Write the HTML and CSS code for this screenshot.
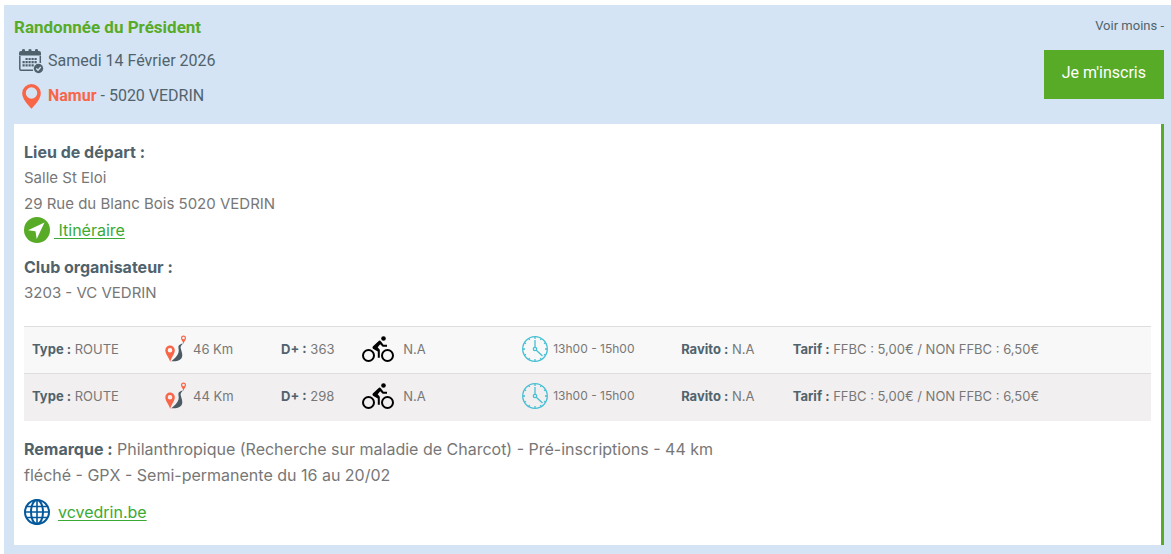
FILE: index.html
```html
<!DOCTYPE html>
<html lang="fr">
<head>
<meta charset="UTF-8">
<meta name="viewport" content="width=device-width, initial-scale=1.0">
<title>Randonnée du Président</title>
<link rel="stylesheet" href="styles.css">
</head>
<body>
<!-- icônes réutilisées dans les lignes de parcours -->
<svg class="icon-defs" width="0" height="0" aria-hidden="true">
  <symbol id="icon-distance" viewBox="0 0 22 28">
    <path fill="#4b5a63" d="M18.200 8.400C16.200 8.700 13.700 9.500 13.400 11.500C13.200 13.500 14.200 15 13.500 17.500C12.500 21 9.500 23.500 6.300 26.300C10 26.600 14.500 26 16.500 23.300C18.600 20 16 15.500 15.600 12.800C15.400 10.500 17.200 9.500 18.200 8.400Z"/>
    <path fill="#f96547" fill-rule="evenodd" d="M5 10.500A4.700 4.700 0 0 0 .3 15.300C.3 19 4 22.500 5.200 27C6.300 22.500 9.800 19 9.800 15.300A4.700 4.700 0 0 0 5 10.500ZM5 12.900A2.300 2.300 0 1 1 5 17.500A2.300 2.300 0 0 1 5 12.900Z"/>
    <path fill="#f96547" fill-rule="evenodd" d="M18.500 .5A2.500 2.500 0 0 0 16 3C16 5 18 6.500 18.500 9C19 6.500 21 5 21 3A2.500 2.500 0 0 0 18.500 .5ZM18.500 1.700A1.300 1.300 0 1 1 18.500 4.300A1.300 1.300 0 0 1 18.500 1.700Z"/>
  </symbol>
  <symbol id="icon-bike" viewBox="0 0 32 27">
    <g fill="none" stroke="#000" stroke-width="2">
      <circle cx="6.500" cy="19.500" r="5.500"/>
      <circle cx="25.500" cy="19.500" r="5.500"/>
    </g>
    <circle cx="21.500" cy="2.500" r="2.300"/>
    <path d="M10.800 10.500L17 4.700Q18.200 4.200 19 5.500L21.500 8.700H25V10.700H20.700L18.200 8.200L15.700 11.300L17.800 13.700V21.800H15.800V15.600L11 12.800Q10 11.700 10.800 10.500Z"/>
  </symbol>
  <symbol id="icon-clock" viewBox="0 0 26 26">
    <g fill="none" stroke="#46bfd3" stroke-width="1.300">
      <circle cx="13" cy="13" r="12.300"/>
      <circle cx="13" cy="13" r="1.700"/>
      <path d="M13 4V11.200M14.300 14.300L20.500 20M13 1V3M13 23V25M1 13H3M23 13H25M6.800 2.500L7.600 4M19.200 2.500L18.400 4M2.500 6.800L4 7.600M23.500 6.800L22 7.600M2.500 19.200L4 18.400M23.500 19.200L22 18.400M6.800 23.500L7.600 22M19.200 23.500L18.400 22"/>
    </g>
  </symbol>
</svg>

<section class="event">
  <header class="event-header">
    <div class="event-info">
      <h2 class="event-title">Randonnée du Président</h2>
      <div class="event-line">
        <svg width="26" height="26" viewBox="0 0 26 26" aria-hidden="true">
          <path fill="#50636d" d="M1 5Q1 3 3 3H4V1.500Q5.500 .3 7 1.500V3H10.500V1.500Q12 .3 13.500 1.500V3H17V1.500Q18.500 .3 20 1.500V3H21Q23 3 23 5V7.500H1Z"/>
          <path fill="none" stroke="#50636d" stroke-width="1.500" d="M1.800 8V21Q1.800 22.200 3 22.200H15M22.300 8V15"/>
          <path fill="none" stroke="#50636d" stroke-width="2.200" stroke-dasharray="2.200 .8" d="M7.500 11H19.500M4.500 14.200H19.500M4.500 17.400H16"/>
          <circle cx="20.500" cy="20.500" r="4.700" fill="#50636d"/>
          <path fill="none" stroke="#d5e4f4" stroke-width="1.300" d="M18.300 20.500L20 22.200L22.800 19"/>
        </svg>
        <span>Samedi 14 Février 2026</span>
      </div>
      <div class="event-line">
        <svg width="26" height="26" viewBox="0 0 26 26" aria-hidden="true">
          <path fill="#f96547" fill-rule="evenodd" d="M13.500 1A9.300 9.300 0 0 0 4.200 10.300C4.200 16 10 22 13.500 25.800C17 22 22.800 16 22.800 10.300A9.300 9.300 0 0 0 13.500 1ZM13.500 4.300A5.700 5.700 0 1 1 13.500 15.700A5.700 5.700 0 0 1 13.500 4.300Z"/>
        </svg>
        <span><strong class="province">Namur</strong> - 5020 VEDRIN</span>
      </div>
    </div>
    <div class="event-actions">
      <button type="button" class="toggle">Voir moins -</button>
      <button type="button" class="register">Je m'inscris</button>
    </div>
  </header>

  <div class="event-details">
    <div class="block">
      <strong>Lieu de départ :</strong>
      <p>Salle St Eloi</p>
      <p>29 Rue du Blanc Bois 5020 VEDRIN</p>
      <div class="link-line">
        <svg width="26" height="26" viewBox="0 0 26 26" aria-hidden="true">
          <circle cx="13" cy="13" r="13" fill="#58ab27"/>
          <path fill="#fff" d="M20.500 5.500L4 13.200L11.500 14.200L12.700 22Z"/>
        </svg>
        <a href="#">&nbsp;Itinéraire</a>
      </div>
    </div>

    <div class="block">
      <strong>Club organisateur :</strong>
      <p>3203 - VC VEDRIN</p>
    </div>

    <table class="routes">
      <colgroup>
        <col class="col-type">
        <col class="col-distance">
        <col class="col-climb">
        <col class="col-bike">
        <col class="col-time">
        <col class="col-food">
        <col>
      </colgroup>
      <tbody>
        <tr>
          <td><strong>Type :</strong> ROUTE</td>
          <td><div class="cell"><svg width="22" height="28" aria-hidden="true"><use href="#icon-distance"/></svg>46 Km</div></td>
          <td><strong>D+ :</strong> 363</td>
          <td><div class="cell bike"><svg width="32" height="27" aria-hidden="true"><use href="#icon-bike"/></svg>N.A</div></td>
          <td><div class="cell time"><svg width="26" height="26" aria-hidden="true"><use href="#icon-clock"/></svg>13h00 - 15h00</div></td>
          <td><strong>Ravito :</strong> N.A</td>
          <td><strong>Tarif :</strong> FFBC : 5,00€ / NON FFBC : 6,50€</td>
        </tr>
        <tr>
          <td><strong>Type :</strong> ROUTE</td>
          <td><div class="cell"><svg width="22" height="28" aria-hidden="true"><use href="#icon-distance"/></svg>44 Km</div></td>
          <td><strong>D+ :</strong> 298</td>
          <td><div class="cell bike"><svg width="32" height="27" aria-hidden="true"><use href="#icon-bike"/></svg>N.A</div></td>
          <td><div class="cell time"><svg width="26" height="26" aria-hidden="true"><use href="#icon-clock"/></svg>13h00 - 15h00</div></td>
          <td><strong>Ravito :</strong> N.A</td>
          <td><strong>Tarif :</strong> FFBC : 5,00€ / NON FFBC : 6,50€</td>
        </tr>
      </tbody>
    </table>

    <p class="remark"><strong>Remarque :</strong> Philanthropique (Recherche sur maladie de Charcot) - Pré-inscriptions - 44 km fléché - GPX - Semi-permanente du 16 au 20/02</p>

    <div class="link-line website">
      <svg width="26" height="26" viewBox="0 0 26 26" aria-hidden="true">
        <g fill="none" stroke="#02589b" stroke-width="2">
          <circle cx="13" cy="13" r="12"/>
          <ellipse cx="13" cy="13" rx="6" ry="12"/>
          <path d="M13 1V25M1 13H25M3 7.500H23M3 18.500H23" stroke-width="1.600"/>
        </g>
      </svg>
      <a href="#">vcvedrin.be</a>
    </div>
  </div>
</section>
</body>
</html>
```
FILE: styles.css
```css
* {
  box-sizing: border-box;
}

body {
  margin: 0;
  padding: 5px 0 0 4px;
  background-color: #fff;
  color: #777;
  font-family: Inter, "Noto Sans", sans-serif;
  font-size: 16px;
  line-height: 26px;
}

h2,
p {
  margin: 0;
}

strong {
  color: #50636d;
  font-weight: 700;
}

a {
  color: #3aaa35;
  text-decoration: underline;
  text-underline-offset: 2px;
}

svg {
  display: block;
  flex-shrink: 0;
}

.icon-defs {
  position: absolute;
}

.event {
  padding: 9px 7px 9px 10px;
  background-color: #d5e4f4;
}

.event-header {
  display: flex;
  justify-content: space-between;
  padding-bottom: 11px;
  color: #50636d;
  font-family: Roboto, "Noto Sans", sans-serif;
}

.event-title {
  margin-bottom: 3px;
  color: #58ab27;
  font-size: 17px;
  font-weight: 700;
  line-height: 26px;
}

.event-line {
  display: flex;
  align-items: center;
  gap: 4px;
  height: 35px;
  padding-left: 4px;
}

.province {
  color: #f96547;
}

.event-actions {
  display: flex;
  flex-direction: column;
  align-items: flex-end;
  gap: 12px;
}

.toggle,
.register {
  border: none;
  font-family: Roboto, "Noto Sans", sans-serif;
  cursor: pointer;
}

.toggle {
  padding: 0;
  background: none;
  color: #50636d;
  font-size: 13px;
  line-height: 24px;
}

.register {
  padding: 10px 18px 14px;
  background-color: #58ab27;
  color: #fff;
  font-size: 16px;
  line-height: 25px;
}

.event-details {
  padding: 15px 10px 20px;
  border-right: 3px solid #58ab27;
  background-color: #fff;
}

.block {
  margin-bottom: 11px;
}

.block p {
  font-size: 15px;
}

.link-line {
  display: flex;
  align-items: center;
  gap: 4px;
}

.website {
  gap: 8px;
}

.routes {
  width: 100%;
  margin: 20px 0 15px;
  border-collapse: collapse;
  table-layout: fixed;
  font-size: 13px;
}

.routes td {
  height: 47px;
  padding: 0 8px 2px;
  border-top: 1px solid #dedede;
  white-space: nowrap;
}

.routes tr:nth-child(odd) {
  background-color: #f8f8f8;
}

.routes tr:nth-child(even) {
  background-color: #f2eff0;
}

.col-type {
  width: 11.8%;
}

.col-distance {
  width: 10.3%;
}

.col-climb {
  width: 7.2%;
}

.col-bike {
  width: 14.2%;
}

.col-time {
  width: 14.1%;
}

.col-food {
  width: 9.9%;
}

.cell {
  display: flex;
  align-items: center;
  gap: 6px;
}

.bike {
  gap: 9px;
}

.time {
  gap: 5px;
  font-size: 12px;
}

.remark {
  max-width: 63%;
  margin-bottom: 11px;
}
```
